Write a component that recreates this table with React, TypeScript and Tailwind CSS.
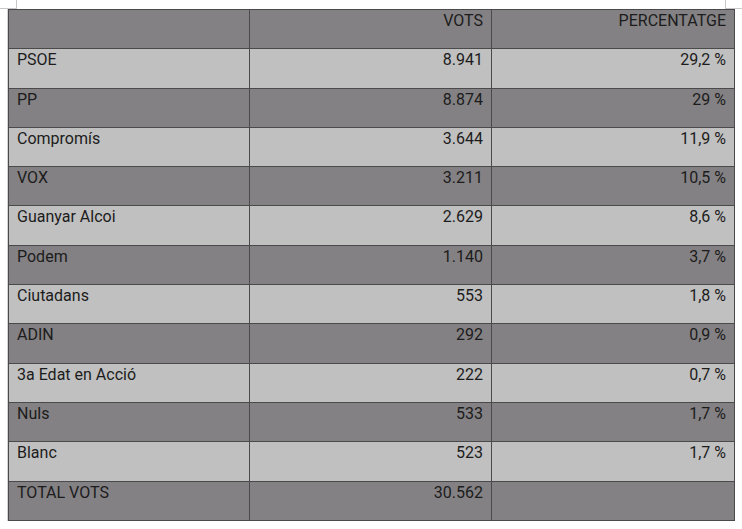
import React from "react";

type Row = { name: string; votes: string; pct: string };

const rows: Row[] = [
  { name: "PSOE", votes: "8.941", pct: "29,2 %" },
  { name: "PP", votes: "8.874", pct: "29 %" },
  { name: "Compromís", votes: "3.644", pct: "11,9 %" },
  { name: "VOX", votes: "3.211", pct: "10,5 %" },
  { name: "Guanyar Alcoi", votes: "2.629", pct: "8,6 %" },
  { name: "Podem", votes: "1.140", pct: "3,7 %" },
  { name: "Ciutadans", votes: "553", pct: "1,8 %" },
  { name: "ADIN", votes: "292", pct: "0,9 %" },
  { name: "3a Edat en Acció", votes: "222", pct: "0,7 %" },
  { name: "Nuls", votes: "533", pct: "1,7 %" },
  { name: "Blanc", votes: "523", pct: "1,7 %" },
];

const cell = "border border-[#4a4a4a] px-[8px] pt-[1px] align-top leading-[20px]";

export default function App() {
  return (
    <div className="w-[742px] h-[529px] bg-white text-[16px] text-[#1c1c1c] font-['Roboto',sans-serif]">
      <div className="flex justify-between h-[9px]">
        <div className="w-[17px] h-[9px] border-r border-b border-[#c8c8c8]" />
        <div className="w-[17px] h-[9px] border-l border-b border-[#c8c8c8]" />
      </div>
      <div className="ml-[8px] w-[726px] shadow-[-1px_0_0_#d4d4d4]">
        <table className="w-full border-collapse table-fixed">
          <colgroup>
            <col className="w-[241px]" />
            <col className="w-[242px]" />
            <col className="w-[243px]" />
          </colgroup>
          <tbody>
            <tr className="h-[39.3px] bg-[#838183]">
              <td className={cell}></td>
              <td className={`${cell} text-right`}>VOTS</td>
              <td className={`${cell} text-right`}>PERCENTATGE</td>
            </tr>
            {rows.map((r, i) => (
              <tr
                key={r.name}
                className={`h-[39.3px] ${i % 2 === 0 ? "bg-[#c0c0c0]" : "bg-[#838183]"}`}
              >
                <td className={cell}>{r.name}</td>
                <td className={`${cell} text-right`}>{r.votes}</td>
                <td className={`${cell} text-right`}>{r.pct}</td>
              </tr>
            ))}
            <tr className="h-[39.3px] bg-[#838183]">
              <td className={cell}>TOTAL VOTS</td>
              <td className={`${cell} text-right`}>30.562</td>
              <td className={cell}></td>
            </tr>
          </tbody>
        </table>
      </div>
    </div>
  );
}
